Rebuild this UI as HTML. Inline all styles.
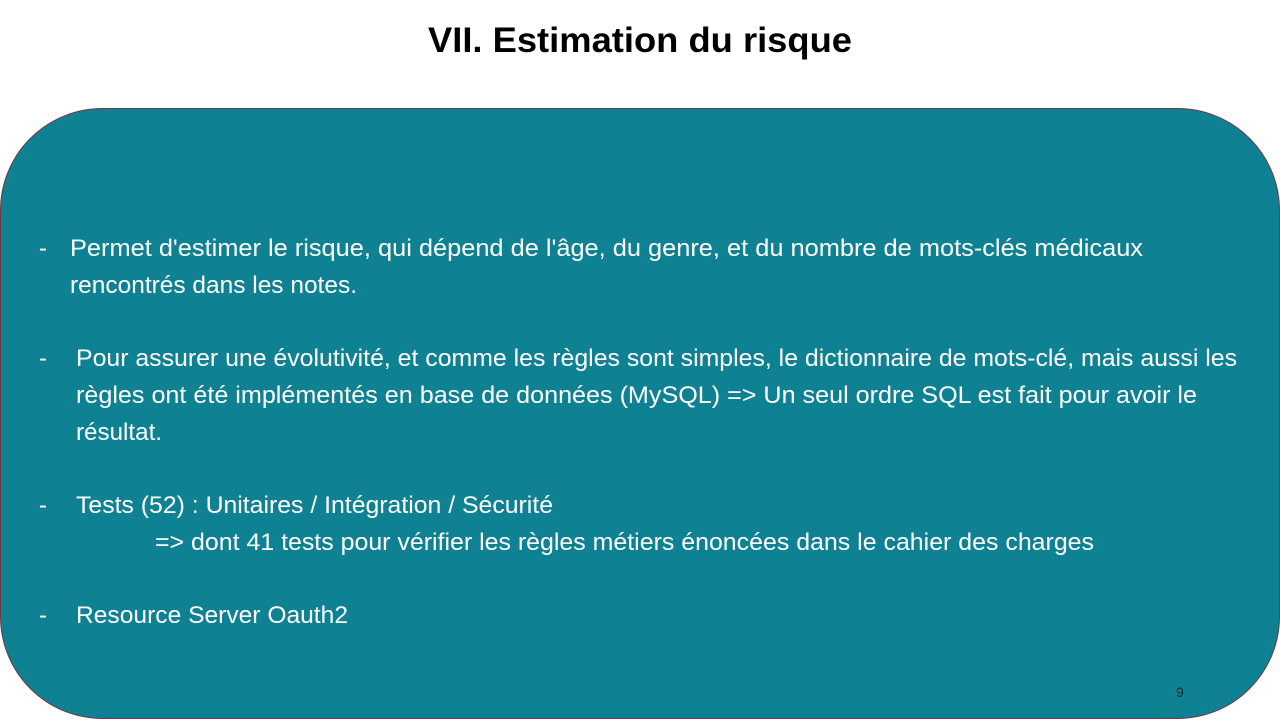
<!DOCTYPE html>
<html><head><meta charset="utf-8"><style>html,body{margin:0;padding:0;background:#fff;width:1280px;height:720px;overflow:hidden}</style></head>
<body>
<svg width="1280" height="720" xmlns="http://www.w3.org/2000/svg" font-family="Liberation Sans, sans-serif">
<rect x="0.5" y="108.5" width="1279" height="610" rx="102" ry="102" fill="#0e8192" stroke="#6b3a4a" stroke-width="1"/>
<text x="428" y="52" font-size="35" font-weight="bold" fill="#000" textLength="424" lengthAdjust="spacingAndGlyphs">VII. Estimation du risque</text>
<g fill="#fff" font-size="24">
<text x="39" y="256">-</text>
<text x="70" y="256" textLength="1073" lengthAdjust="spacingAndGlyphs">Permet d'estimer le risque, qui dépend de l'âge, du genre, et du nombre de mots-clés médicaux</text>
<text x="70" y="293" textLength="287" lengthAdjust="spacingAndGlyphs">rencontrés dans les notes.</text>
<text x="39" y="366">-</text>
<text x="76" y="366" textLength="1161" lengthAdjust="spacingAndGlyphs">Pour assurer une évolutivité, et comme les règles sont simples, le dictionnaire de mots-clé, mais aussi les</text>
<text x="76" y="403" textLength="1121" lengthAdjust="spacingAndGlyphs">règles ont été implémentés en base de données (MySQL) =&gt; Un seul ordre SQL est fait pour avoir le</text>
<text x="76" y="440" textLength="86" lengthAdjust="spacingAndGlyphs">résultat.</text>
<text x="39" y="513">-</text>
<text x="76" y="513" textLength="477" lengthAdjust="spacingAndGlyphs">Tests (52) : Unitaires / Intégration / Sécurité</text>
<text x="155" y="550" textLength="939" lengthAdjust="spacingAndGlyphs">=&gt; dont 41 tests pour vérifier les règles métiers énoncées dans le cahier des charges</text>
<text x="39" y="623">-</text>
<text x="76" y="623" textLength="272" lengthAdjust="spacingAndGlyphs">Resource Server Oauth2</text>
</g>
<text x="1176" y="697" font-size="14" fill="#1a2a30">9</text>
</svg>
</body></html>
